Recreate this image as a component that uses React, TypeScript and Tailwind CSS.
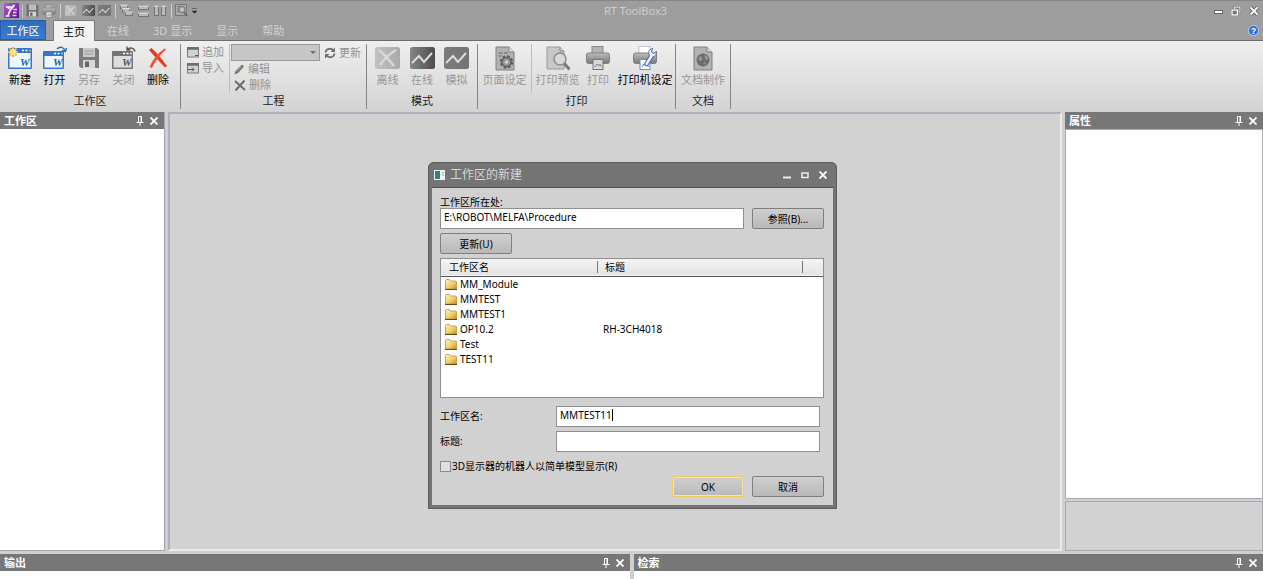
import { useState } from "react";
import type { ReactNode } from "react";

const folders = [
  { name: "MM_Module", title: "" },
  { name: "MMTEST", title: "" },
  { name: "MMTEST1", title: "" },
  { name: "OP10.2", title: "RH-3CH4018" },
  { name: "Test", title: "" },
  { name: "TEST11", title: "" },
];

/* ---------- icons ---------- */

function AppIcon() {
  return (
    <svg width="15" height="15" viewBox="0 0 15 15">
      <defs>
        <linearGradient id="app" x1="0" y1="0" x2="1" y2="1">
          <stop offset="0" stopColor="#b45be0" />
          <stop offset="1" stopColor="#56128c" />
        </linearGradient>
      </defs>
      <rect width="15" height="15" fill="url(#app)" />
      <path d="M2 4h6.500l2-2L6 7.500l-2 5M3 4l2.500 2M1.500 13h4" stroke="#fff" strokeWidth="1.600" fill="none" />
      <path d="M9.500 6.500h3.500M9 9.500h3.500M8.500 12.500h4" stroke="#e9d4f7" strokeWidth="1.300" />
    </svg>
  );
}

function FloppyIcon({ size = 22, light = false }: { size?: number; light?: boolean }) {
  return (
    <svg width={size} height={size} viewBox="0 0 22 22">
      <path d="M1 1h18l2 2v18H3l-2-2z" fill={light ? "#707070" : "#7c7c7c"} />
      <rect x="5" y="1" width="12" height="9" fill="#c9c9c9" />
      <path d="M6.500 4h9M6.500 7h9" stroke="#999" />
      <rect x="5" y="13" width="12" height="8" fill="#d6d6d6" />
      <rect x="7" y="14.500" width="4" height="5.500" fill="#666" />
    </svg>
  );
}

function PrinterIcon({ size = 24, wrench = false }: { size?: number; wrench?: boolean }) {
  return (
    <svg width={size} height={size} viewBox="0 0 24 24">
      <defs>
        <linearGradient id="prn" x1="0" y1="0" x2="0" y2="1">
          <stop offset="0" stopColor="#bdbdbd" />
          <stop offset="1" stopColor="#787878" />
        </linearGradient>
      </defs>
      <rect x="6" y="0.500" width="11" height="9" fill={wrench ? "#fff" : "#b4b4b4"} stroke={wrench ? "#b9c4d6" : "#8a8a8a"} />
      <rect x="0.500" y="7" width="23" height="10.500" rx="2" fill="url(#prn)" stroke="#808080" />
      <path d="M1 12.500h22" stroke="#969696" />
      <rect x="7" y="13.500" width="10" height="10" fill={wrench ? "#fff" : "#d8d8d8"} stroke={wrench ? "#4f95cc" : "#777"} />
      <path d="M9 21l2-3 2 2 1-2 1.500 3" stroke={wrench ? "#2f86c6" : "#888"} fill="none" />
      {wrench && (
        <>
          <path d="M13.500 18l5-8" stroke="#4a62b4" strokeWidth="4.500" strokeLinecap="round" />
          <path d="M19.500 2.500c-4 1-5 5-2.500 7.500 3 2 6.500 0 6.500-4.500l-3 2-2-1.500z" fill="#f2f5ff" stroke="#4a62b4" />
          <path d="M13.500 18l5-8" stroke="#eef2ff" strokeWidth="2.500" strokeLinecap="round" />
        </>
      )}
    </svg>
  );
}

function WindowIcon({ kind }: { kind: "new" | "open" | "close" }) {
  const frame = kind === "close" ? "#757575" : "#3576c8";
  const top = kind === "new" ? 2 : 5;
  return (
    <svg width="26" height="24" viewBox="0 0 26 24">
      <rect x="1" y={top} width={kind === "new" ? 24 : 21} height={23 - top} rx="1" fill={frame} />
      <rect x="2.500" y={top + 5} width={kind === "new" ? 21 : 18} height={16.500 - top} fill={kind === "close" ? "#dedede" : "#eef7fd"} />
      <path d={`M${kind === "new" ? 15 : 12} ${top + 2.500}h2m1.500 0h2`} stroke="#fff" strokeWidth="1.500" />
      <path d={`M${kind === "new" ? 22 : 19} ${top + 2.500}h2`} stroke={kind === "close" ? "#ddd" : "#f0a050"} strokeWidth="1.500" />
      <text
        x={kind === "new" ? 13 : 11}
        y="20"
        fontSize="11"
        fontStyle="italic"
        fontWeight="700"
        fontFamily="'Liberation Serif', serif"
        fill={kind === "close" ? "#555" : "#1c63a8"}
      >
        W
      </text>
      {kind === "new" && (
        <>
          <path d="M6 1v10M1 6h10M2.500 2.500l7 7M9.500 2.500l-7 7" stroke="#e9b64c" strokeWidth="2.200" />
          <circle cx="6" cy="6" r="3" fill="#ffe48c" />
        </>
      )}
      {kind === "open" && (
        <path d="M15 3c3-3 7-2 8 2M24.500 2L23.500 5.500 20 4.500" stroke="#2b69b8" strokeWidth="1.400" fill="none" />
      )}
      {kind === "close" && (
        <path d="M24 5.500c-1-4-5-4.500-8-2M16 0.500v3.500h3.500" stroke="#555" strokeWidth="1.400" fill="none" />
      )}
    </svg>
  );
}

function RedCross() {
  return (
    <svg width="20" height="22" viewBox="0 0 20 22">
      <path d="M1 3l2.500-2C8 5 14 12 19 19l-2 1.500C11 14 6 9 1 3z" fill="#e8391c" />
      <path d="M16.500 1.500l1.500 1C12 8 7 14 4 21l-2.500-1C5 12 10 6 16.500 1.500z" fill="#ee5230" />
    </svg>
  );
}

function ModeIcon({ kind, size = 25 }: { kind: "off" | "on" | "sim"; size?: number }) {
  return (
    <svg width={size} height={size > 20 ? 22 : 11} viewBox="0 0 25 22" preserveAspectRatio="none">
      <defs>
        <linearGradient id="mode-off" x1="0" y1="0" x2="1" y2="0">
          <stop offset="0" stopColor="#c2c2c2" />
          <stop offset="1" stopColor="#aaa" />
        </linearGradient>
        <linearGradient id="mode-on" x1="0" y1="0" x2="1" y2="0">
          <stop offset="0" stopColor="#868686" />
          <stop offset="1" stopColor="#4c4c4c" />
        </linearGradient>
        <linearGradient id="mode-sim" x1="0" y1="0" x2="1" y2="0">
          <stop offset="0" stopColor="#7c7c7c" />
          <stop offset="1" stopColor="#747474" />
        </linearGradient>
      </defs>
      <rect width="25" height="22" rx="2.500" fill={`url(#mode-${kind})`} />
      {kind === "off" ? (
        <path d="M4 3c5 4 10 9 15 16M21 3C14 7 9 12 5 18" stroke="#dadada" strokeWidth="2.300" fill="none" />
      ) : (
        <path d="M2 16l7-7 5 6 8-9" stroke="#dcdcdc" strokeWidth="2" fill="none" />
      )}
    </svg>
  );
}

function PageIcon({ kind }: { kind: "gear" | "lens" | "globe" }) {
  const lens = kind === "lens";
  return (
    <svg width="24" height="25" viewBox="0 0 24 25">
      <path
        d={lens ? "M1 1h13l4 4v18H1z" : "M3 1h13l5 5v18H3z"}
        fill={lens ? "#c8c8c8" : "#b2b2b2"}
        stroke={lens ? "#999" : "#808080"}
      />
      <path d={lens ? "M14 1v4h4" : "M16 1v5h5"} stroke="#808080" fill="#e2e2e2" />
      {kind === "gear" && (
        <>
          <path d="M5.500 7h4M11 7h4M5.500 10h3" stroke="#666" />
          <circle cx="13.500" cy="16" r="5.500" fill="none" stroke="#5c5c5c" strokeWidth="2.500" strokeDasharray="2.600 1.700" />
          <circle cx="13.500" cy="16" r="4.500" fill="#999" stroke="#636363" strokeWidth="1.500" />
          <circle cx="13.500" cy="16" r="1.500" fill="#ddd" />
        </>
      )}
      {lens && (
        <>
          <path d="M18 17l5.500 6.500" stroke="#777" strokeWidth="3" />
          <circle cx="14" cy="13" r="6" fill="#d8d8d8" stroke="#8b8b8b" strokeWidth="1.500" />
        </>
      )}
      {kind === "globe" && (
        <>
          <circle cx="12" cy="14" r="6.500" fill="#6c6c6c" />
          <path d="M8 11c3-2 4 1 3 3s-3 1-4-1zM13 9c2 0 4 2 4.500 4l-3 1zM12 17l3-1-1 3z" fill="#959595" />
        </>
      )}
    </svg>
  );
}

function SmallWindow({ arrow = false }: { arrow?: boolean }) {
  return (
    <svg width="12" height="11" viewBox="0 0 12 11">
      <rect x="0.500" y="0.500" width="11" height="9.500" fill="#d2d2d2" stroke="#7a7a7a" />
      <path d="M0 1.500h12" stroke="#6d6d6d" strokeWidth="2.500" />
      {arrow ? <path d="M1 6.500h6M5 4.500l2 2-2 2" stroke="#555" fill="none" /> : <path d="M8 8.500h3" stroke="#555" />}
    </svg>
  );
}

function PencilIcon() {
  return (
    <svg width="11" height="11" viewBox="0 0 11 11">
      <path d="M0.500 10.500l1-3.500L8 0.500l2 2L4 9z" fill="#707070" />
      <path d="M2.500 7.500l5-5" stroke="#aaa" />
    </svg>
  );
}

function GrayCross() {
  return (
    <svg width="12" height="11" viewBox="0 0 12 11">
      <path d="M1 1l10 9M10.500 0.500L1.500 10.500" stroke="#6a6a6a" strokeWidth="2" />
    </svg>
  );
}

function RefreshIcon() {
  return (
    <svg width="12" height="12" viewBox="0 0 12 12">
      <path d="M1.500 5.500C2 1.500 7 0.500 9.500 3.500M10.500 6.500C10 10.500 5 11.500 2.500 8.500" stroke="#6f6f6f" strokeWidth="1.800" fill="none" />
      <path d="M11 0.500v4.500H6.500zM1 11.500V7h4.500z" fill="#6f6f6f" />
    </svg>
  );
}

function LayoutIcon({ kind }: { kind: "cascade" | "rows" | "cols" }) {
  const boxes = {
    cascade: [[0, 0], [2, 3.500], [5, 7]],
    rows: [[1, 1], [1, 8]],
    cols: [[0, 1], [7, 1]],
  }[kind];
  const w = kind === "rows" ? 10 : kind === "cols" ? 4 : 7;
  const h = kind === "cols" ? 10 : 4;
  return (
    <svg width="14" height="13" viewBox="0 0 14 13">
      {boxes.map(([x, y], i) => (
        <g key={i}>
          <rect x={x + 0.500} y={y + 0.500} width={w} height={h} fill="#b9b9b9" stroke="#757575" />
          <path d={`M${x} ${y + 1}h${w + 1}`} stroke="#dedede" strokeWidth="1.200" />
        </g>
      ))}
    </svg>
  );
}

function PreviewIcon() {
  return (
    <svg width="13" height="13" viewBox="0 0 13 13">
      <rect x="0.500" y="0.500" width="11" height="11" fill="#a9a9a9" stroke="#777" />
      <path d="M2 2.500h4M2 5h2M2 7.500h2" stroke="#777" />
      <circle cx="7" cy="5.500" r="3" fill="#c2c2c2" stroke="#6c6c6c" />
      <path d="M9 8l3 4" stroke="#666" strokeWidth="1.500" />
    </svg>
  );
}

function PinIcon() {
  return (
    <svg width="8" height="10" viewBox="0 0 8 10">
      <path d="M2.500 6V0.500h3V6M0.500 6.500h7M4 6.500V10" stroke="#fff" fill="none" />
      <path d="M5 0v6" stroke="#fff" />
    </svg>
  );
}

function CloseIcon() {
  return (
    <svg width="8" height="8" viewBox="0 0 8 8">
      <path d="M0.500 0.500l7 7M7.500 0.500l-7 7" stroke="#fff" strokeWidth="1.800" />
    </svg>
  );
}

function FolderIcon() {
  return (
    <svg width="12" height="11" viewBox="0 0 12 11">
      <defs>
        <linearGradient id="folder" x1="0" y1="0" x2="1" y2="1">
          <stop offset="0" stopColor="#fff3c4" />
          <stop offset="0.550" stopColor="#f2cf68" />
          <stop offset="1" stopColor="#cc8a14" />
        </linearGradient>
      </defs>
      <path d="M0.500 1.500q0-1 1-1h3l1 1.500h5q1 0 1 1v7h-11z" fill="url(#folder)" stroke="#b59548" strokeWidth="0.800" />
      <path d="M0 10.500h12" stroke="#6b4a10" />
    </svg>
  );
}

/* ---------- ribbon ---------- */

function RibbonButton({ icon, label, enabled = false, width = "w-[34px]" }: { icon: ReactNode; label: string; enabled?: boolean; width?: string }) {
  return (
    <button type="button" className={`${width} flex flex-col items-center whitespace-nowrap ${enabled ? "text-black" : "text-[#979797]"}`}>
      <span className="flex h-7 items-center justify-center">{icon}</span>
      <span className="leading-4">{label}</span>
    </button>
  );
}

function SmallButton({ icon, label }: { icon: ReactNode; label: string }) {
  return (
    <button type="button" className="flex h-4 items-center gap-[3px] whitespace-nowrap text-[#929292]">
      {icon}
      <span className="leading-4">{label}</span>
    </button>
  );
}

function RibbonGroup({ label, children }: { label: string; children: ReactNode }) {
  return (
    <section className="flex flex-col border-r border-[#858585]">
      <div className="flex h-[50px]">{children}</div>
      <h2 className="text-center leading-4 text-[#222]">{label}</h2>
    </section>
  );
}

function Divider() {
  return <span className="mx-px h-3.5 w-px bg-[#d0d0d0]" />;
}

function Ribbon() {
  return (
    <div className="flex h-[71px] bg-linear-to-b from-[#efefef] to-[#d3d3d3] pt-[3px] pb-[3px] text-[11px]">
      <RibbonGroup label="工作区">
        <div className="flex pr-[5px] pl-[3px]">
          <RibbonButton icon={<WindowIcon kind="new" />} label="新建" enabled />
          <RibbonButton icon={<WindowIcon kind="open" />} label="打开" enabled width="w-[35px]" />
          <RibbonButton icon={<FloppyIcon />} label="另存" />
          <RibbonButton icon={<WindowIcon kind="close" />} label="关闭" width="w-[35px]" />
          <RibbonButton icon={<RedCross />} label="删除" enabled />
        </div>
      </RibbonGroup>
      <RibbonGroup label="工程">
        <div className="border-r border-[#bdbdbd] pr-[5px] pl-[6px]">
          <SmallButton icon={<SmallWindow />} label="追加" />
          <SmallButton icon={<SmallWindow arrow />} label="导入" />
        </div>
        <div className="pr-[5px] pl-px">
          <div className="flex items-center gap-1">
            <div className="relative">
              <select aria-label="工程" className="block h-[17px] w-[89px] appearance-none border border-[#999] bg-[#c6c6c6]" />
              <span className="pointer-events-none absolute top-[7px] right-1 border-x-3 border-t-3 border-x-transparent border-t-[#707070]" />
            </div>
            <SmallButton icon={<RefreshIcon />} label="更新" />
          </div>
          <div className="pl-[3px]">
            <SmallButton icon={<PencilIcon />} label="编辑" />
            <SmallButton icon={<GrayCross />} label="删除" />
          </div>
        </div>
      </RibbonGroup>
      <RibbonGroup label="模式">
        <div className="flex px-[3px]">
          <RibbonButton icon={<ModeIcon kind="off" />} label="离线" width="w-[35px]" />
          <RibbonButton icon={<ModeIcon kind="on" />} label="在线" />
          <RibbonButton icon={<ModeIcon kind="sim" />} label="模拟" width="w-[35px]" />
        </div>
      </RibbonGroup>
      <RibbonGroup label="打印">
        <div className="border-r border-[#bdbdbd] px-[3px]">
          <RibbonButton icon={<PageIcon kind="gear" />} label="页面设定" width="w-[47px]" />
        </div>
        <div className="flex pl-0.5">
          <RibbonButton icon={<PageIcon kind="lens" />} label="打印预览" width="w-[47px]" />
          <RibbonButton icon={<PrinterIcon />} label="打印" />
          <RibbonButton icon={<PrinterIcon wrench />} label="打印机设定" enabled width="w-[60px]" />
        </div>
      </RibbonGroup>
      <RibbonGroup label="文档">
        <div className="px-1">
          <RibbonButton icon={<PageIcon kind="globe" />} label="文档制作" width="w-[46px]" />
        </div>
      </RibbonGroup>
    </div>
  );
}

function TitleBar() {
  return (
    <header className="grid h-5 grid-cols-[1fr_auto_1fr] items-center border-t border-[#868686] bg-[#9d9d9d]">
      <div className="flex items-center gap-[3px] pl-1">
        <AppIcon />
        <span className="h-3.5 w-px bg-[#c4c4c4]" />
        <button type="button" aria-label="保存"><FloppyIcon size={13} light /></button>
        <button type="button" aria-label="打印"><PrinterIcon size={14} /></button>
        <Divider />
        <button type="button" aria-label="离线"><ModeIcon kind="off" size={12} /></button>
        <button type="button" aria-label="在线" className="pl-0.5"><ModeIcon kind="on" size={13} /></button>
        <button type="button" aria-label="模拟"><ModeIcon kind="sim" size={13} /></button>
        <Divider />
        <button type="button" aria-label="层叠"><LayoutIcon kind="cascade" /></button>
        <button type="button" aria-label="水平排列"><LayoutIcon kind="rows" /></button>
        <button type="button" aria-label="垂直排列"><LayoutIcon kind="cols" /></button>
        <span className="h-3.5 w-px bg-[#d0d0d0]" />
        <button type="button" aria-label="预览"><PreviewIcon /></button>
        <button type="button" aria-label="更多">
          <svg width="7" height="6" viewBox="0 0 7 6">
            <path d="M1 0.500h5M1 3h5L3.500 5.500z" stroke="#333" strokeWidth="0.500" fill="#333" />
          </svg>
        </button>
      </div>
      <h1 className="pl-2 text-[11px] leading-4 text-[#cecece]">RT ToolBox3</h1>
      <div className="flex items-center justify-end gap-2 pr-1">
        <button type="button" aria-label="最小化">
          <svg width="9" height="10" viewBox="0 0 9 10"><rect x="0.500" y="4.500" width="8" height="3" fill="#fff" stroke="#666" /></svg>
        </button>
        <button type="button" aria-label="还原">
          <svg width="10" height="10" viewBox="0 0 10 10">
            <rect x="3.500" y="1" width="5.500" height="5" stroke="#5c5c5c" strokeWidth="2" fill="none" />
            <rect x="3.500" y="1" width="5.500" height="5" stroke="#eee" fill="#888" />
            <rect x="1" y="4" width="5.500" height="5" stroke="#5c5c5c" strokeWidth="2" fill="none" />
            <rect x="1" y="4" width="5.500" height="5" stroke="#fff" strokeWidth="1.300" fill="#777" />
          </svg>
        </button>
        <button type="button" aria-label="关闭">
          <svg width="10" height="10" viewBox="0 0 10 10">
            <path d="M1.500 1.500l7 7M8.500 1.500l-7 7" stroke="#555" strokeWidth="3.400" />
            <path d="M1.500 1.500l7 7M8.500 1.500l-7 7" stroke="#fff" strokeWidth="1.800" />
          </svg>
        </button>
      </div>
    </header>
  );
}

function TabRow() {
  const tabs = ["在线", "3D 显示", "显示", "帮助"];
  return (
    <nav className="flex h-[21px] items-stretch border-b border-[#6b6b6b] bg-[#9d9d9d] text-[11px] leading-[19px]">
      <button type="button" className="mr-[7px] w-[46px] border border-[#2b5da8] bg-linear-to-b from-[#2f6cc0] to-[#3a7bd2] leading-[17px] text-white">
        工作区
      </button>
      <button type="button" className="-mb-px w-[42px] rounded-t-xs border border-b-0 border-[#7d7d7d] bg-[#f2f2f2] text-black">
        主页
      </button>
      {tabs.map((tab) => (
        <button key={tab} type="button" className="px-3 text-[#d2d2d2]">
          {tab}
        </button>
      ))}
      <button type="button" aria-label="帮助" className="mr-1 ml-auto">
        <svg width="11" height="11" viewBox="0 0 11 11">
          <circle cx="5.500" cy="5.500" r="5" fill="#2e6fd6" stroke="#cfe0ff" strokeWidth="0.800" />
          <text x="5.500" y="9" fontSize="9" fontWeight="700" textAnchor="middle" fontFamily="'Liberation Sans', sans-serif" fill="#fff">?</text>
        </svg>
      </button>
    </nav>
  );
}

/* ---------- docked panels ---------- */

function PanelHeader({ title }: { title: string }) {
  return (
    <div className="flex h-[17px] shrink-0 items-center gap-1.5 bg-[#777] pr-1.5 pl-1 text-[11px] font-bold text-white">
      <h2 className="mr-auto leading-[17px]">{title}</h2>
      <button type="button" aria-label={`固定 ${title}`}><PinIcon /></button>
      <button type="button" aria-label={`关闭 ${title}`}><CloseIcon /></button>
    </div>
  );
}

/* ---------- dialog ---------- */

function DialogButton({ children, primary = false }: { children: ReactNode; primary?: boolean }) {
  return (
    <button
      type="button"
      className={`h-[21px] w-[72px] shrink-0 rounded-xs border bg-linear-to-b from-[#cfcfcf] to-[#b9b9b9] leading-4 ${
        primary ? "border-[#eccb5e] ring-1 ring-[#f6e7a4] ring-inset" : "border-[#7f7f7f]"
      }`}
    >
      {children}
    </button>
  );
}

function NewWorkspaceDialog() {
  const [path, setPath] = useState("E:\\ROBOT\\MELFA\\Procedure");
  const [name, setName] = useState("MMTEST11");
  const [title, setTitle] = useState("");
  const field = "h-[21px] border border-[#8f8f8f] bg-white px-[3px] pb-1 outline-none";

  return (
    <div role="dialog" aria-label="工作区的新建" className="w-[409px] rounded-t-md border-4 border-t-0 border-[#747474] bg-[#d1d1d1] text-[10px] text-black outline -outline-offset-1 outline-[#5e5e5e]">
      <div className="flex h-[26px] items-center gap-[5px] border-b border-[#4f4f4f] bg-[#747474] px-[2px]">
        <svg width="11" height="10" viewBox="0 0 11 10">
          <rect width="11" height="10" fill="#f2f2f2" />
          <rect x="1" y="1" width="5" height="8" fill="#2f7f8a" />
          <path d="M8 2.500h2M8 5h2" stroke="#8bb58b" />
        </svg>
        <h2 className="mr-auto text-[12px] leading-4 text-[#d6d6d6]">工作区的新建</h2>
        <div className="flex items-center gap-2.5 pr-1">
          <button type="button" aria-label="最小化">
            <svg width="8" height="8" viewBox="0 0 8 8"><path d="M0 6.500h8" stroke="#eee" strokeWidth="2" /></svg>
          </button>
          <button type="button" aria-label="最大化">
            <svg width="8" height="8" viewBox="0 0 8 8"><path d="M1 2h6v4.500H1z" stroke="#eee" strokeWidth="1.500" fill="none" /></svg>
          </button>
          <button type="button" aria-label="关闭"><CloseIcon /></button>
        </div>
      </div>

      <form className="flex flex-col pt-2 pr-[9px] pb-2 pl-2" onSubmit={(e) => e.preventDefault()}>
        <label htmlFor="path" className="leading-3">工作区所在处:</label>
        <div className="flex gap-2">
          <input id="path" className={`${field} min-w-0 flex-1`} value={path} onChange={(e) => setPath(e.target.value)} />
          <DialogButton>参照(B)...</DialogButton>
        </div>
        <div className="mt-1 flex">
          <DialogButton>更新(U)</DialogButton>
        </div>

        <div className="mt-1 h-[140px] border border-[#8f8f8f] bg-white">
          <table className="w-full table-fixed border-collapse text-left">
            <thead>
              <tr className="h-[17px] border-b border-[#555] bg-linear-to-b from-[#f4f4f4] to-[#e4e4e4]">
                <th className="w-[157px] p-0 font-normal">
                  <div className="border-r border-[#777] pl-2 leading-3">工作区名</div>
                </th>
                <th className="p-0 font-normal">
                  <div className="border-r border-[#777] pl-[7px] leading-3">标题</div>
                </th>
                <th className="w-5 p-0" />
              </tr>
            </thead>
            <tbody>
              {folders.map((folder) => (
                <tr key={folder.name} className="h-[15px]">
                  <td className="p-0">
                    <div className="flex items-center gap-[3px] pl-1 leading-[15px]">
                      <FolderIcon />
                      {folder.name}
                    </div>
                  </td>
                  <td className="p-0 pl-[5px] leading-[15px]">{folder.title}</td>
                  <td className="p-0" />
                </tr>
              ))}
            </tbody>
          </table>
        </div>

        <div className="mt-2 grid grid-cols-[116px_1fr] items-center gap-y-1 pr-1">
          <label htmlFor="name">工作区名:</label>
          <div className="relative flex">
            <input id="name" className={`${field} min-w-0 flex-1`} value={name} onChange={(e) => setName(e.target.value)} />
            <span className="pointer-events-none absolute top-[3px] left-1 flex">
              <span className="invisible">{name}</span>
              <span className="h-3 w-px bg-black" />
            </span>
          </div>
          <label htmlFor="title">标题:</label>
          <input id="title" className={`${field} min-w-0`} value={title} onChange={(e) => setTitle(e.target.value)} />
        </div>

        <label className="mt-2 flex items-center gap-px leading-3">
          <input type="checkbox" className="size-[11px] appearance-none border border-[#8a8a8a] bg-[#e0e0e0] checked:bg-[#555]" />
          3D显示器的机器人以简单模型显示(R)
        </label>

        <div className="mt-1 flex justify-end gap-2">
          <DialogButton primary>OK</DialogButton>
          <DialogButton>取消</DialogButton>
        </div>
      </form>
    </div>
  );
}

export default function App() {
  return (
    <div className="flex min-h-screen flex-col bg-[#cfcfcf] font-['Noto_Sans','Noto_Sans_CJK_SC',sans-serif]">
      <TitleBar />
      <TabRow />
      <Ribbon />

      <main className="relative flex flex-1 gap-[3px]">
        <aside className="flex w-[165px] flex-col border-r border-b border-[#a5a5ad] bg-white">
          <PanelHeader title="工作区" />
        </aside>
        <div className="flex-1 border-2 border-t-[#b0b0bf] border-r-[#ececec] border-b-[#ececec] border-l-[#b0b0bf] bg-[#d2d2d2]" />
        <aside className="flex w-[198px] flex-col gap-0.5">
          <PanelHeader title="属性" />
          <div className="-mt-0.5 flex-1 border border-[#a9a9b4] bg-white" />
          <div className="h-[50px] border border-[#a9a9b4] bg-[#d2d2d2]" />
        </aside>

        <div className="absolute inset-0 flex items-center justify-center pt-2 pl-0.5">
          <NewWorkspaceDialog />
        </div>
      </main>

      <footer className="mt-[3px] flex gap-1">
        <section className="h-[25px] flex-1 bg-white"><PanelHeader title="输出" /></section>
        <section className="h-[25px] flex-1 bg-white"><PanelHeader title="检索" /></section>
      </footer>
    </div>
  );
}
